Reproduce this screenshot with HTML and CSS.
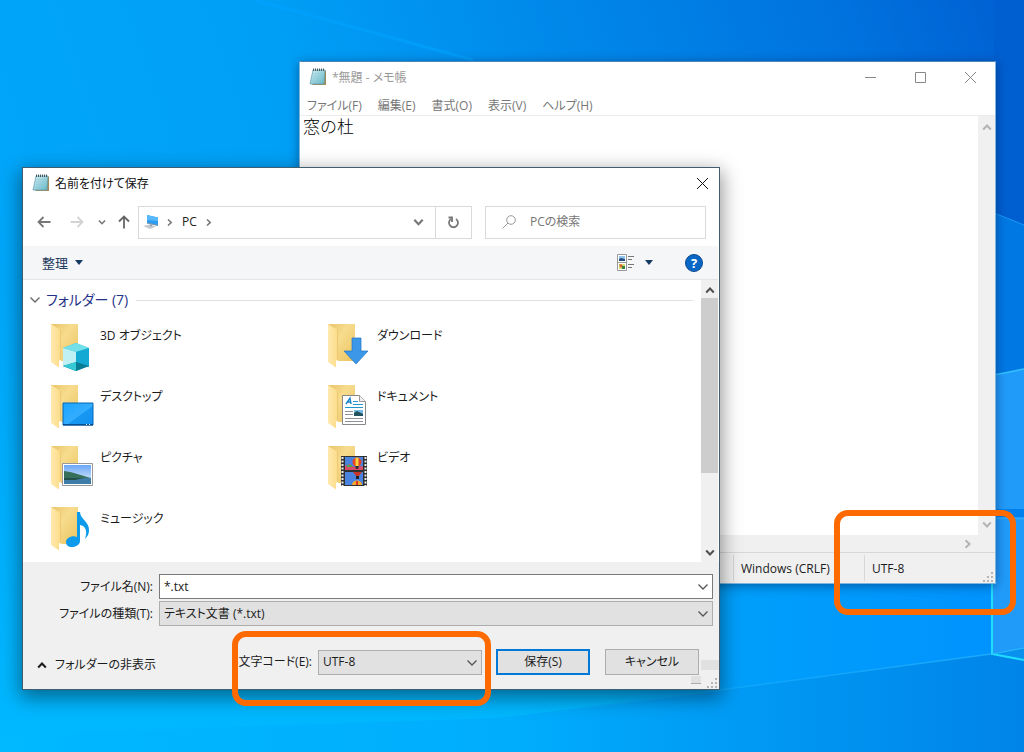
FILE: index.html
```html
<!DOCTYPE html>
<html lang="ja">
<head>
<meta charset="utf-8">
<title>名前を付けて保存</title>
<link rel="stylesheet" href="styles.css">
</head>
<body>
<svg class="defs" aria-hidden="true">
  <defs>
    <linearGradient id="gPad" x1="0" y1="0" x2="1" y2="1"><stop offset="0" stop-color="#d4f0f4"/><stop offset="1" stop-color="#62b4c6"/></linearGradient>
    <linearGradient id="gBack" x1="0" y1="0" x2="1" y2="1"><stop offset="0" stop-color="#e9c468"/><stop offset=".4" stop-color="#f7dc8e"/><stop offset="1" stop-color="#eac35e"/></linearGradient>
    <linearGradient id="gFront" x1="0" y1="0" x2="1" y2="0"><stop offset="0" stop-color="#ffe9ae"/><stop offset="1" stop-color="#fbdc89"/></linearGradient>
    <linearGradient id="gScreen" x1="0" y1="0" x2="1" y2="1"><stop offset="0" stop-color="#1ba6ff"/><stop offset=".55" stop-color="#34adff"/><stop offset=".57" stop-color="#1698f2"/><stop offset="1" stop-color="#168ff0"/></linearGradient>
    <linearGradient id="gSky" x1="0" y1="0" x2="0" y2="1"><stop offset="0" stop-color="#6ba7f5"/><stop offset="1" stop-color="#e4f2fc"/></linearGradient>
    <symbol id="notepad" viewBox="0 0 18 18">
      <path d="M15 2.500h2v14.500H3z" fill="#a58a58"/>
      <path d="M4 2h12l-1 14H1z" fill="url(#gPad)" stroke="#5f9cab" stroke-width=".7"/>
      <path d="M4.500 5.500h10M4 8h10M3.500 10.500h10M3 13h10" stroke="#8fcbd6" stroke-width=".6"/>
      <path d="M4.500 3V.500M6.500 3V.500M8.500 3V.500M10.500 3V.500M12.500 3V.500M14.500 3V.500" stroke="#4a5a60" stroke-width="1"/>
    </symbol>
    <symbol id="folder" viewBox="0 0 44 48">
      <path d="M1 1h27v37H11z" fill="url(#gBack)"/>
      <path d="M1 1l9.500 6v29.500L9 38v6.500L1 39z" fill="url(#gFront)"/>
      <path d="M10.500 7v30" stroke="#e6c26a" stroke-width=".7"/>
    </symbol>
    <symbol id="down" viewBox="0 0 12 8"><path d="M1.500 1.500L6 6l4.500-4.500" fill="none" stroke="currentColor" stroke-width="1.300"/></symbol>
    <symbol id="chev" viewBox="0 0 10 8"><path d="M1.200 1.500L5 5.500l3.800-4" fill="none" stroke="currentColor" stroke-width="2"/></symbol>
    <symbol id="grip" viewBox="0 0 10 10"><path d="M8 0h2v2H8zM4 4h2v2H4zM8 4h2v2H8zM0 8h2v2H0zM4 8h2v2H4zM8 8h2v2H8z" fill="#b5b5b5"/></symbol>
  </defs>
</svg>

<main class="desktop">
  <svg class="wallpaper" viewBox="0 0 1024 752" preserveAspectRatio="none" aria-hidden="true">
    <defs>
      <linearGradient id="wBase" gradientUnits="userSpaceOnUse" x1="0" y1="400" x2="1024" y2="40"><stop offset="0" stop-color="#00a8fb"/><stop offset=".35" stop-color="#009ff6"/><stop offset=".6" stop-color="#0088e9"/><stop offset=".85" stop-color="#0072de"/><stop offset="1" stop-color="#0060d2"/></linearGradient>
      <linearGradient id="wFloor" x1="0" y1="0" x2="1" y2="0"><stop offset="0" stop-color="#00b9ff"/><stop offset=".5" stop-color="#00adfd"/><stop offset=".7" stop-color="#009cf5"/><stop offset="1" stop-color="#0084e8"/></linearGradient>
      <linearGradient id="wGlow" x1="0" y1="0" x2="0" y2="1"><stop offset="0" stop-color="#00b5ff" stop-opacity="0"/><stop offset="1" stop-color="#00b9ff"/></linearGradient>
      <linearGradient id="wWall" x1="0" y1="0" x2="1" y2="0"><stop offset="0" stop-color="#00a5fb" stop-opacity="0"/><stop offset=".3" stop-color="#009ffa"/><stop offset="1" stop-color="#0092ff"/></linearGradient>
      <linearGradient id="wLine" x1="0" y1="0" x2="1" y2="0"><stop offset="0" stop-color="#27b9ff" stop-opacity="0"/><stop offset="1" stop-color="#27b5ff"/></linearGradient>
    </defs>
    <path d="M0 0h1024v752H0z" fill="url(#wBase)"/>
    <path d="M255 0L473 60" stroke="#00a4ff" stroke-width="3" opacity=".6"/>
    <path d="M0 300h1024v452H0z" fill="url(#wGlow)"/>
    <path d="M600 560h424v180H600z" fill="url(#wWall)"/>
    <path d="M0 752V735L500 718 720 690 991 654l33 6v92z" fill="url(#wFloor)"/>
    <path d="M500 720L720 690 991 654" fill="none" stroke="url(#wLine)" stroke-width="1.500" opacity=".7"/>
    <path d="M994 0h30v225l-30-12z" fill="#005fd0"/>
    <path d="M994 213l30 12v420h-30z" fill="#0078e4"/>
    <path d="M994 213l30 12" stroke="#1699f2"/>
    <path d="M994 375l30-6v280l-33 5z" fill="#219bfa"/>
    <path d="M994 375l30-6" stroke="#35c3ff" stroke-width="1.500"/>
    <path d="M994 509h30v8h-30z" fill="#0080ee"/>
    <path d="M994 518l30 1" stroke="#33adff"/>
    <path d="M991 654l33-6v12z" fill="#0a91ed"/>
    <path d="M992 583v71l32 6" fill="none" stroke="#20dcff" stroke-width="2"/>
    <path d="M992 654l32-6" stroke="#2cbcff"/>
  </svg>

  <section class="window notepad" aria-label="メモ帳">
    <header class="np-title">
      <svg class="app-icon"><use href="#notepad"/></svg>
      <span class="np-name">*無題 - メモ帳</span>
      <button class="ctl" aria-label="最小化"><svg viewBox="0 0 11 11"><path d="M0 5.500h11"/></svg></button>
      <button class="ctl" aria-label="最大化"><svg viewBox="0 0 11 11"><path d="M.5.500h10v10H.5z"/></svg></button>
      <button class="ctl" aria-label="閉じる"><svg viewBox="0 0 11 11"><path d="M0 0l11 11M11 0L0 11"/></svg></button>
    </header>
    <nav class="menu">
      <button>ファイル(F)</button><button>編集(E)</button><button>書式(O)</button><button>表示(V)</button><button>ヘルプ(H)</button>
    </nav>
    <div class="np-body">
      <textarea class="np-text" aria-label="テキスト" spellcheck="false">窓の杜</textarea>
      <div class="np-vscroll"><svg class="arrow flip"><use href="#chev"/></svg><svg class="arrow"><use href="#chev"/></svg></div>
    </div>
    <div class="np-hscroll"><svg class="arrow turn"><use href="#chev"/></svg></div>
    <footer class="status">
      <span class="cell eol">Windows (CRLF)</span>
      <span class="cell enc">UTF-8</span>
      <svg class="grip"><use href="#grip"/></svg>
    </footer>
  </section>

  <section class="window dialog" role="dialog" aria-label="名前を付けて保存">
    <header class="dl-title">
      <svg class="app-icon"><use href="#notepad"/></svg>
      <span class="dl-name">名前を付けて保存</span>
      <button class="ctl" aria-label="閉じる"><svg viewBox="0 0 11 11"><path d="M0 0l11 11M11 0L0 11"/></svg></button>
    </header>

    <div class="nav">
      <button class="nav-btn" aria-label="戻る"><svg viewBox="0 0 14 14"><path d="M13.500 7H1.500M6.500 2L1.500 7l5 5"/></svg></button>
      <button class="nav-btn faint" aria-label="進む"><svg viewBox="0 0 14 14"><path d="M.5 7h12M7.500 2l5 5-5 5"/></svg></button>
      <button class="nav-small" aria-label="履歴"><svg viewBox="0 0 10 8"><use href="#chev"/></svg></button>
      <button class="nav-btn up" aria-label="上へ"><svg viewBox="0 0 14 14"><path d="M7 13.500v-12M2 6.500l5-5 5 5"/></svg></button>
      <div class="address">
        <svg class="pc" viewBox="0 0 18 17"><path d="M5 1l11 2.500v8L5 9z" fill="#2d9df0"/><path d="M5 1l11 2.500V7L5 6z" fill="#58b8fb"/><path d="M5 9l11 2.500" stroke="#7892a6"/><path d="M1 12l7-1.500 6 2L8 15z" fill="#c3c9cf"/><path d="M8 10l2 .5v2L8 12z" fill="#9aa4ad"/></svg>
        <svg class="crumb"><use href="#chev"/></svg>
        <button class="crumb-name">PC</button>
        <svg class="crumb"><use href="#chev"/></svg>
        <button class="addr-drop" aria-label="場所の一覧"><svg viewBox="0 0 10 8"><use href="#chev"/></svg></button>
        <button class="refresh" aria-label="更新"><svg viewBox="0 0 13 13"><path d="M9 3a4.500 4.500 0 1 1-5 0"/><path d="M1.500 1.500H5V6"/></svg></button>
      </div>
      <label class="search"><svg viewBox="0 0 14 14"><circle cx="9" cy="5" r="4.300"/><path d="M6 8L.7 13.300"/></svg><input type="search" placeholder="PCの検索" aria-label="PCの検索"></label>
    </div>

    <div class="toolbar">
      <button class="organize">整理<i class="tri"></i></button>
      <button class="view" aria-label="表示方法">
        <svg viewBox="0 0 17 17"><path d="M.5.500h9v16h-9zM.5 8.500h9" fill="#fff" stroke="#999"/><path d="M2 2h6v5H2z" fill="#8dc3ee"/><path d="M2 5l2-1 4 1v2H2z" fill="#244d80"/><path d="M2 10h6v5H2z" fill="#d8dd73"/><path d="M2 11l2-1 2 2-2 2z" fill="#d56635"/><path d="M5 12h3v3H5z" fill="#36843e"/><path d="M11 2.500h6M11 5.500h4M11 10.500h6M11 13.500h4" stroke="#777"/></svg>
        <i class="tri"></i>
      </button>
      <button class="help" aria-label="ヘルプ">?</button>
    </div>

    <div class="files">
      <div class="listing">
        <h2 class="group"><svg class="arrow-thin"><use href="#down"/></svg>フォルダー (7)</h2>
        <ul class="folders">
          <li><svg viewBox="0 0 44 48"><use href="#folder"/><path d="M26 20l13 5v18l-13 5-13-5V25z" fill="#23c1d8"/><path d="M26 20l13 5-13 4-13-4z" fill="#73dfe9"/><path d="M13 25l13 4v12l-13 3z" fill="#c0f0f4"/><path d="M26 29l13-4v19l-13-4z" fill="#14a9d2"/><path d="M13 43l13-4 13 4-13 5z" fill="#087d93"/><path d="M13 43l13-4v9z" fill="#35cad6"/></svg><span>3D オブジェクト</span></li>
          <li><svg viewBox="0 0 44 48"><use href="#folder"/><path d="M25 15h9v13h7L29 41 17 28h8z" fill="#3b97e7" stroke="#2477c0" stroke-width=".7"/></svg><span>ダウンロード</span></li>
          <li><svg viewBox="0 0 44 48"><use href="#folder"/><path d="M13 19h30v22H13z" fill="url(#gScreen)" stroke="#0866b4"/><path d="M13 40h30v1.500H13z" fill="#064f91"/><path d="M36 40.500h1M39 40.500h1" stroke="#fff"/></svg><span>デスクトップ</span></li>
          <li><svg viewBox="0 0 44 48"><use href="#folder"/><path d="M15.500 11.500h17l6 6v23h-23z" fill="#fff" stroke="#888"/><path d="M32.500 11.500v6h6" fill="#eee" stroke="#999"/><path d="M19 20l4-6 1 6M20 18h4" fill="none" stroke="#1782c8" stroke-width="1.400"/><path d="M26 17.500h5M26 20.500h10M18 23.500h18" stroke="#2396cf"/><path d="M18 27.500h8M18 30.500h8M18 34.500h18M18 37.500h18" stroke="#8b9299"/><path d="M27 26h9v6h-9z" fill="#75b9e5"/><path d="M27 29l3-2 6 3v2h-9z" fill="#23525f"/></svg><span>ドキュメント</span></li>
          <li><svg viewBox="0 0 44 48"><use href="#folder"/><path d="M12.500 18.500h30v22h-30z" fill="#fff" stroke="#999"/><path d="M14 20h27v19H14z" fill="url(#gSky)"/><path d="M14 26c8 1 16 4 27 7H14z" fill="#36705a"/><path d="M14 33h27v6H14z" fill="#3f7da9"/><path d="M14 33h20l-9 2H14z" fill="#234f4a"/></svg><span>ピクチャ</span></li>
          <li><svg viewBox="0 0 44 48"><use href="#folder"/><path d="M14 11h26v30H14z" fill="#303030"/><path d="M15.500 12v29M38.500 12v29" stroke="#eee" stroke-width="2" stroke-dasharray="2 1.500"/><path d="M18 12h18v13H18zM18 27h18v13H18z" fill="#4a82e0"/><path d="M18 21l5-2 4 3 9-1v4H18z" fill="#d34d6b"/><path d="M20 20h5v2h-5z" fill="#43ae4c"/><ellipse cx="30" cy="17" rx="4.500" ry="4.500" fill="#e64427"/><path d="M28.500 12.700h3v8.500h-3z" fill="#f8d33b"/><path d="M28 21h4l-1 3h-2z" fill="#333"/><path d="M26 27h9l-4 5h-1z" fill="#c93428"/><path d="M29 31h3v3h-3z" fill="#222"/><path d="M25 40c0-6 10-6 10 0z" fill="#f5a72b"/><path d="M29 36h2v4h-2z" fill="#d93529"/></svg><span>ビデオ</span></li>
          <li><svg viewBox="0 0 44 48"><use href="#folder"/><path d="M27 6h3c0 7 10 10 9 19 0 3-2 6-4 8 3-9 0-13-5-14v16c0 4-5 6-8 6-4 0-6-2-6-5 0-4 6-7 11-5z" fill="#0c9bea"/></svg><span>ミュージック</span></li>
        </ul>
      </div>
      <div class="vscroll"><svg class="arrow flip"><use href="#chev"/></svg><div class="track"><div class="thumb"></div></div><svg class="arrow"><use href="#chev"/></svg></div>
    </div>

    <form class="form">
      <div class="fields">
        <label for="fname">ファイル名(N):</label>
        <div class="combo white"><input id="fname" type="text" value="*.txt"><svg><use href="#down"/></svg></div>
        <label for="ftype">ファイルの種類(T):</label>
        <div class="combo"><select id="ftype"><option>テキスト文書 (*.txt)</option></select><svg><use href="#down"/></svg></div>
      </div>
      <div class="actions">
        <button type="button" class="hide"><svg class="flip"><use href="#chev"/></svg>フォルダーの非表示</button>
        <label for="code">文字コード(E):</label>
        <div class="combo code"><select id="code"><option>UTF-8</option></select><svg><use href="#down"/></svg></div>
        <button type="button" class="btn primary">保存(S)</button>
        <button type="button" class="btn">キャンセル</button>
      </div>
    </form>
    <i class="residue side"></i><i class="residue low"></i>
    <svg class="grip"><use href="#grip"/></svg>
  </section>

  <div class="ring ring-dialog"></div>
  <div class="ring ring-status"></div>
</main>
</body>
</html>
```

FILE: styles.css
```css
* { box-sizing: border-box; }
body { margin: 0; }
body, button, input, select {
  font-family: "Open Sans", "Noto Sans CJK JP", sans-serif;
  font-size: 12px;
  line-height: 18px;
  font-feature-settings: "palt";
  color: #1b1b1b;
}
button { border: 0; padding: 0; background: none; white-space: nowrap; }
svg { display: block; flex: none; }
.defs { position: absolute; width: 0; height: 0; }

.desktop { position: relative; height: 100vh; min-height: 752px; min-width: 1000px; overflow: hidden; background: #009cf2; }
.wallpaper { position: absolute; width: 100%; height: 100%; }

.window { position: absolute; display: flex; flex-direction: column; background: #fff; }
.notepad { left: 299px; right: 28px; top: 61px; bottom: 168px; border: 1px solid #7fb4dc; border-top-color: #4a86b8; box-shadow: 0 2px 10px rgba(0, 20, 60, .45); }
.dialog { left: 22px; right: 304px; top: 167px; bottom: 62px; border: 1px solid #3f5e70; box-shadow: 0 6px 18px 2px rgba(0, 0, 0, .42); }

.app-icon { width: 18px; height: 18px; }
.ctl { display: grid; place-items: center; width: 50px; height: 30px; }
.ctl svg { width: 11px; height: 11px; overflow: visible; fill: none; stroke: currentColor; stroke-width: 1; }

/* Notepad */
.np-title { display: flex; align-items: center; gap: 5px; height: 30px; padding-left: 9px; }
.np-title .ctl { color: #888; margin-left: -5px; }
.np-name { flex: 1; color: #999; padding-top: 2px; }
.menu { display: flex; align-items: flex-end; gap: 16px; height: 24px; padding-left: 7px; border-bottom: 1px solid #ececec; }
.menu button { color: #777; }
.np-body { flex: 1; display: flex; min-height: 0; }
.np-text { flex: 1; border: 0; margin: 0; padding: 0 3px; resize: none; outline: 0; background: #fff; color: #000; font: 300 17px/20px "Noto Sans CJK JP", sans-serif; overflow: hidden; }
.np-vscroll { width: 17px; display: flex; flex-direction: column; justify-content: space-between; align-items: center; padding: 7px 0 6px; background: #f0f0f0; color: #b4b4b4; }
.arrow { width: 10px; height: 8px; }
.flip { transform: rotate(180deg); }
.turn { transform: rotate(-90deg); }
.np-hscroll { display: flex; align-items: center; justify-content: flex-end; height: 17px; padding-right: 22px; background: #f0f0f0; color: #b4b4b4; }
.status { position: relative; display: flex; justify-content: flex-end; height: 31px; padding: 2px 0; background: #f0f0f0; border-top: 1px solid #d7d7d7; }
.cell { width: 131px; padding: 5px 7px; border-left: 1px solid #d7d7d7; white-space: nowrap; }
.grip { position: absolute; right: 2px; bottom: 1px; width: 10px; height: 10px; }

/* Dialog header */
.dl-title { display: flex; align-items: center; gap: 5px; height: 30px; padding-left: 9px; }
.dl-name { flex: 1; color: #111; padding-top: 2px; }
.dl-title .ctl { width: 33px; color: #111; }
.nav { display: flex; align-items: center; height: 48px; padding: 0 13px 0 14px; color: #777; }
.nav button { color: inherit; }
.nav-btn svg { width: 14px; height: 14px; fill: none; stroke: currentColor; stroke-width: 1.8; }
.nav-btn { width: 33px; }
.nav .faint { width: 28px; color: #d3d3d3; }
.nav-small svg { width: 8px; height: 7px; }
.nav-small { width: 19px; }
.nav .up { width: 21px; color: #666; }
.address { flex: 1; display: flex; align-items: center; height: 33px; border: 1px solid #d9d9d9; }
.pc { width: 18px; height: 17px; margin: 0 6px 0 3px; }
.crumb { width: 8px; height: 7px; transform: rotate(-90deg); }
.nav .crumb-name { margin: 0 8px; color: #222; }
.addr-drop { margin-left: auto; width: 34px; display: grid; place-items: center; }
.addr-drop svg { width: 11px; height: 9px; }
.refresh { display: grid; place-items: center; width: 36px; height: 31px; border-left: 1px solid #d9d9d9; }
.refresh svg { width: 13px; height: 13px; fill: none; stroke: #777; stroke-width: 1.8; }
.search { display: flex; align-items: center; gap: 14px; width: 221px; height: 33px; margin-left: 13px; padding-left: 16px; border: 1px solid #d9d9d9; }
.search svg { width: 14px; height: 14px; fill: none; stroke: #999; stroke-width: 1; }
.search input { flex: 1; min-width: 0; border: 0; padding: 0; outline: 0; background: none; }
.search input::placeholder { color: #777; }

.toolbar { display: flex; align-items: center; height: 34px; margin-right: 1px; padding: 0 15px 0 19px; background: #f4f6f8; border-bottom: 1px solid #e2e6ea; }
.toolbar button { color: #1e3a5c; }
.toolbar .organize { display: flex; align-items: center; gap: 7px; font-size: 13px; }
.tri { width: 0; height: 0; border: 4px solid transparent; border-top: 5px solid #173a63; border-bottom: 0; }
.view { display: flex; align-items: center; gap: 11px; margin-left: auto; }
.view svg { width: 17px; height: 17px; }
.toolbar .help { width: 18px; height: 18px; margin-left: 32px; border: 1px solid #0b4a8e; border-radius: 50%; background: #0867c5; color: #fff; font-size: 13px; font-weight: 700; line-height: 16px; }

/* File listing */
.files { flex: 1; display: flex; min-height: 0; margin-right: 1px; }
.listing { flex: 1; padding: 10px 8px 0 6px; overflow: hidden; }
.group { display: flex; align-items: center; gap: 5px; margin: 0 0 13px; font-size: 14px; font-weight: 400; line-height: 20px; color: #1e3287; }
.group::after { content: ""; flex: 1; height: 1px; margin-left: 3px; background: #e0e0e0; }
.arrow-thin { width: 12px; height: 8px; color: #666; }
.folders { display: grid; grid-template-columns: 277px 277px; grid-auto-rows: 61px; margin: 0; padding: 0 0 0 21px; list-style: none; }
.folders li { display: flex; gap: 6px; }
.folders svg { width: 44px; height: 48px; }
.folders span { padding-top: 4px; }
.vscroll { width: 17px; display: flex; flex-direction: column; align-items: center; padding: 6px 0 5px; background: #f0f0f0; color: #505050; }
.track { flex: 1; width: 100%; margin: 4px 0; }
.thumb { height: 71%; background: #cdcdcd; }

/* Dialog form */
.form { padding: 12px 6px 14px 14px; background: #f0f0f0; }
.fields { display: grid; grid-template-columns: 116px 1fr; gap: 2px 6px; align-items: center; }
.fields label { justify-self: end; }
label { white-space: nowrap; }
.combo { position: relative; height: 25px; border: 1px solid #adadad; background: #e1e1e1; }
.combo.white { background: #fff; border-color: #7a7a7a; }
.combo input, .combo select { display: block; width: 100%; height: 100%; margin: 0; padding: 0 22px 0 4px; border: 0; outline: 0; background: none; appearance: none; }
.combo svg { position: absolute; right: 3px; top: 8px; width: 12px; height: 8px; color: #555; pointer-events: none; }
.actions { display: flex; align-items: center; padding: 23px 14px 0 0; }
.hide { display: flex; align-items: center; gap: 8px; margin-right: auto; padding-top: 5px; }
.hide svg { width: 10px; height: 8px; }
.code { width: 164px; margin: 0 14px 0 6px; }
.btn { width: 94px; height: 26px; border: 1px solid #adadad; background: #e1e1e1; }
.btn.primary { margin-right: 15px; border: 2px solid #0078d7; }
.residue { position: absolute; background: #e1e1e1; }
.side { right: 0; bottom: 19px; width: 18px; height: 10px; }
.low { right: 18px; bottom: 5px; width: 10px; height: 8px; border-bottom: 1px solid #adadad; }

/* Highlights over the desktop */
.ring { position: absolute; border: 6px solid #ff6a00; border-radius: 14px; pointer-events: none; }
.ring-dialog { left: 232px; top: 631px; width: 259px; height: 75px; }
.ring-status { right: 8px; top: 510px; width: 182px; height: 105px; }
```
